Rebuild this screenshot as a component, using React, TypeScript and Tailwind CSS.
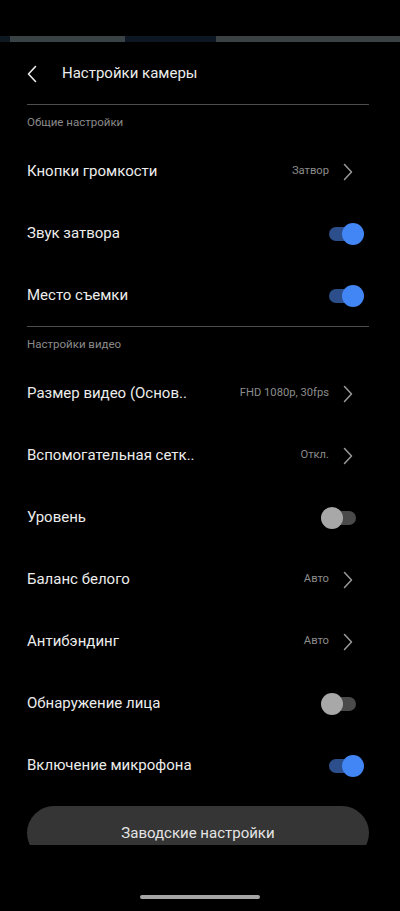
import React from "react";

type Row =
    | { label: string; kind: "link"; value: string }
    | { label: string; kind: "toggle"; on: boolean };

const general: Row[] = [
    { label: "Кнопки громкости", kind: "link", value: "Затвор" },
    { label: "Звук затвора", kind: "toggle", on: true },
    { label: "Место съемки", kind: "toggle", on: true },
];

const video: Row[] = [
    { label: "Размер видео (Основ..", kind: "link", value: "FHD 1080p, 30fps" },
    { label: "Вспомогательная сетк..", kind: "link", value: "Откл." },
    { label: "Уровень", kind: "toggle", on: false },
    { label: "Баланс белого", kind: "link", value: "Авто" },
    { label: "Антибэндинг", kind: "link", value: "Авто" },
    { label: "Обнаружение лица", kind: "toggle", on: false },
    { label: "Включение микрофона", kind: "toggle", on: true },
];

const Chevron = () => (
    <svg width="10" height="18" viewBox="0 0 10 18" fill="none">
        <path d="M1.5 1.5 L8.5 9 L1.5 16.5" stroke="#9a9a9a" strokeWidth="1.5" strokeLinecap="round" strokeLinejoin="round" />
    </svg>
);

const Toggle = ({ on }: { on: boolean }) => (
    <div className="relative w-[43px] h-[22px]">
        <div className={`absolute left-[8px] top-[4px] w-[27px] h-[14px] rounded-full ${on ? "bg-[#2c4f8c]" : "bg-[#4a4a4a]"}`} />
        <div className={`absolute top-0 w-[22px] h-[22px] rounded-full ${on ? "right-0 bg-[#4285f4]" : "left-0 bg-[#a8a8a8]"}`} />
    </div>
);

const SettingRow = ({ row }: { row: Row }) => (
    <div className={`h-[62px] flex items-center justify-between pl-[27px] pt-[1px] ${row.kind === "link" ? "pr-[47px]" : "pr-[36px]"}`}>
        <span className="text-[15px] text-[#ececec]">{row.label}</span>
        {row.kind === "link" ? (
            <div className="flex items-center gap-[14px]">
                <span className="text-[11.2px] text-[#8c8c8c]">{row.value}</span>
                <Chevron />
            </div>
        ) : (
            <Toggle on={row.on} />
        )}
    </div>
);

const SectionTitle = ({ title }: { title: string }) => (
    <div className="h-[35px] flex items-center px-[27px] text-[11.5px] text-[#8a8a8a]">{title}</div>
);

const App = () => {
    return (
        <div className="w-[400px] h-[911px] bg-black overflow-hidden flex flex-col" style={{ fontFamily: "Roboto, 'Noto Sans', sans-serif" }}>
            <div className="h-[36px]" />
            <div className="h-[6px] flex">
                <div className="w-[10px] bg-[#0e1820]" />
                <div className="w-[115px] bg-[#394345]" />
                <div className="w-[91px] bg-[#0d1723]" />
                <div className="flex-1 bg-[#3a4243]" />
            </div>

            <header className="h-[62px] flex items-center pl-[27px] pt-[1px]">
                <svg width="10" height="18" viewBox="0 0 10 18" fill="none">
                    <path d="M8.5 1.5 L1.5 9 L8.5 16.5" stroke="#ececec" strokeWidth="1.6" strokeLinecap="round" strokeLinejoin="round" />
                </svg>
                <h1 className="ml-[25px] text-[15px] text-[#ececec]">Настройки камеры</h1>
            </header>

            <div className="ml-[27px] mr-[31px] h-px bg-[#4d4d4d]" />
            <SectionTitle title="Общие настройки" />
            {general.map((row) => (
                <SettingRow key={row.label} row={row} />
            ))}

            <div className="ml-[27px] mr-[31px] h-px bg-[#4d4d4d]" />
            <SectionTitle title="Настройки видео" />
            {video.map((row) => (
                <SettingRow key={row.label} row={row} />
            ))}

            <div className="mt-[10px] ml-[27px] mr-[31px] h-[39px] overflow-hidden">
                <button className="w-full h-[54px] rounded-full bg-[#353535] text-[15px] text-[#e4e4e4] pt-[1px]">
                    Заводские настройки
                </button>
            </div>

            <div className="flex-1 flex items-end justify-center pb-[12px]">
                <div className="w-[120px] h-[4px] rounded-full bg-[#a5a5a5]" />
            </div>
        </div>
    );
};

export default App;
